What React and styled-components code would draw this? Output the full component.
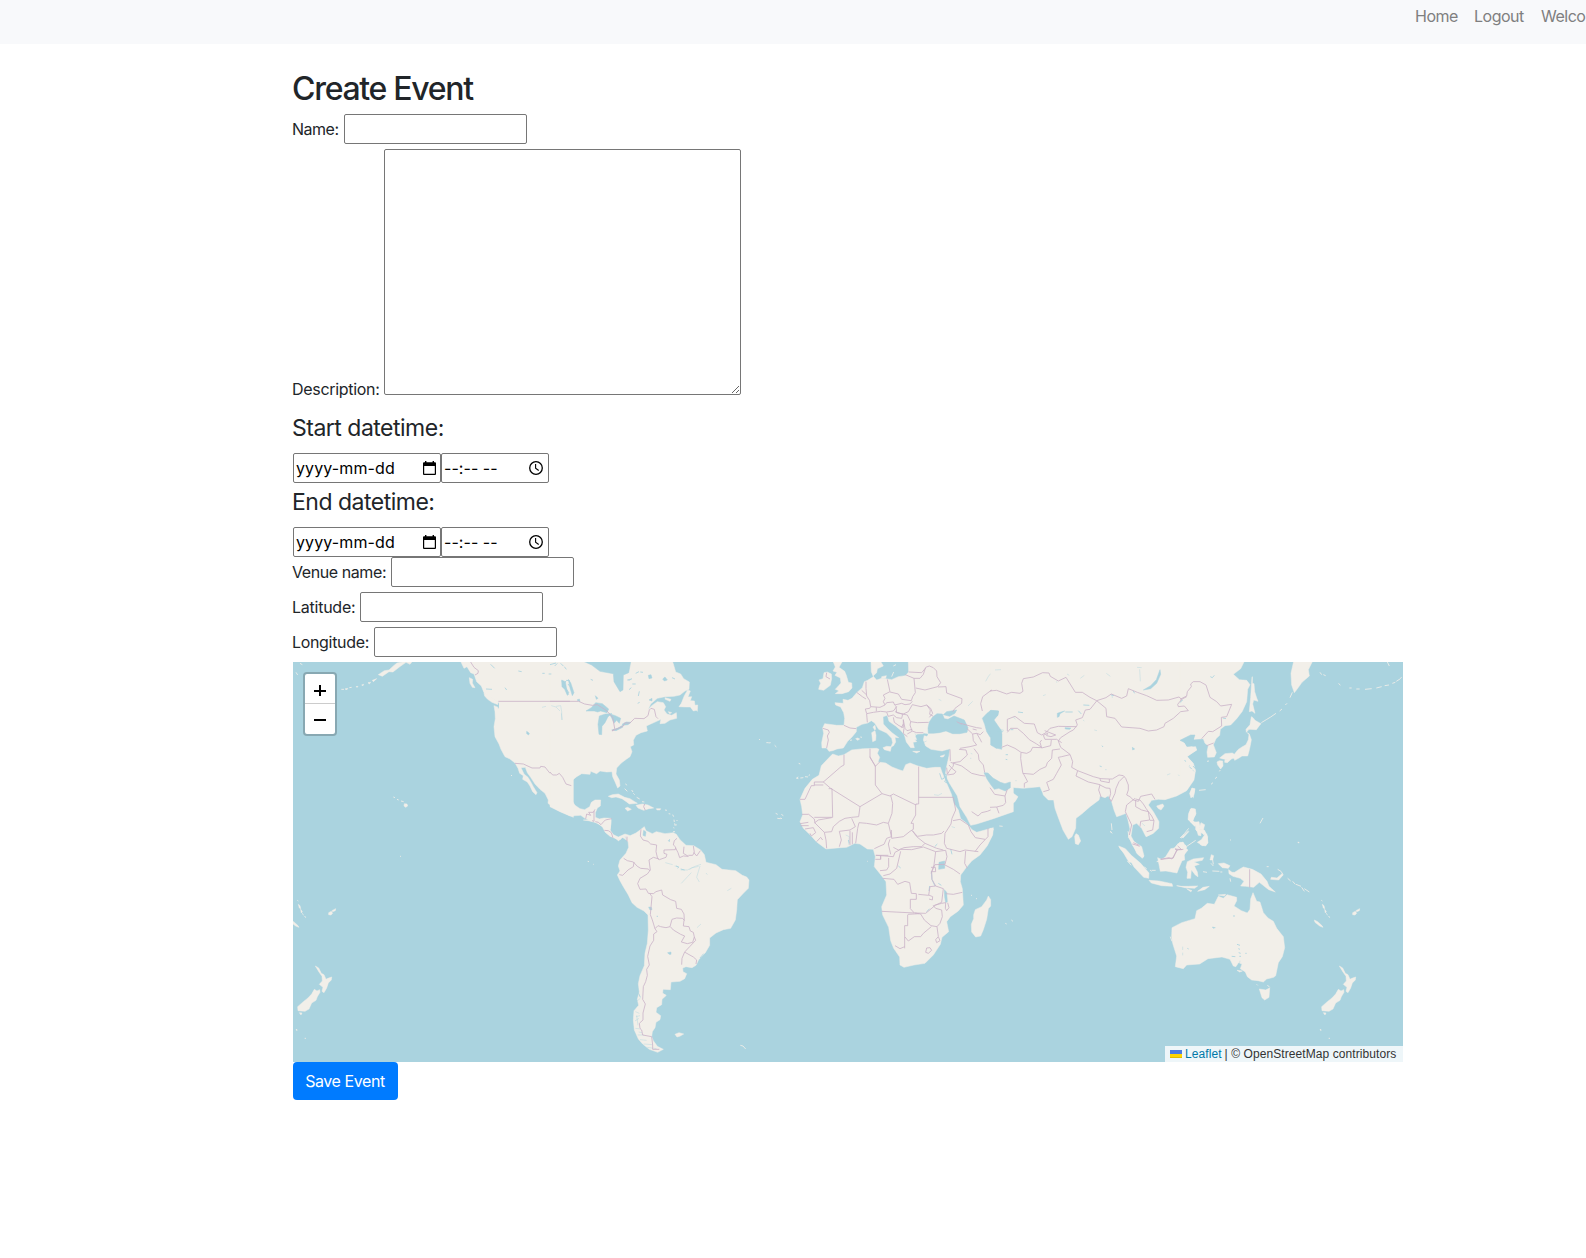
import React from "react";
import styled, { createGlobalStyle } from "styled-components";

const GlobalStyle = createGlobalStyle`
  *, *::before, *::after { box-sizing: border-box; }
  body {
    margin: 0;
    background: #fff;
    color: #212529;
    font-family: Inter, Roboto, sans-serif;
    font-size: 16px;
    line-height: 24px;
    overflow: hidden;
  }
`;

const Navbar = styled.nav`
  display: flex;
  height: 44px;
  padding-left: 1407px;
  overflow: hidden;
  background: #f8f9fb;
`;

const NavLink = styled.a`
  flex: none;
  padding: 4px 8px 0;
  width: ${(p) => p.$width}px;
  white-space: nowrap;
  color: #7f7f80;
  letter-spacing: -0.5px;
`;

const Container = styled.main`
  width: 1110px;
  margin: 26px 0 0 293px;
`;

const Title = styled.h2`
  margin: 0 0 6px -1px;
  font-size: 32px;
  line-height: 38px;
  font-weight: 500;
  letter-spacing: -1.3px;
`;

const Subtitle = styled.h4`
  margin: 0 0 10px -1px;
  padding-top: ${(p) => p.$top}px;
  font-size: 23px;
  line-height: 29px;
  font-weight: 400;
  letter-spacing: -0.5px;
`;

const Field = styled.div`
  display: flex;
  align-items: ${(p) => (p.$bottom ? "flex-end" : "center")};
  margin-bottom: ${(p) => p.$gap ?? 5}px;
`;

const Label = styled.label`
  flex: none;
  width: ${(p) => p.$width + 1}px;
  margin-left: -1px;
  white-space: nowrap;
  letter-spacing: ${(p) => p.$spacing}px;
  margin-bottom: ${(p) => (p.$low ? -6 : 0)}px;
`;

const TextInput = styled.input`
  width: 183px;
  height: 30px;
  margin: 0;
  padding: 1px 2px;
  border: 1px solid #767676;
  border-radius: 2px;
  outline: none;
`;

const TextArea = styled.textarea`
  display: block;
  width: 357px;
  height: 246px;
  margin: 0;
  padding: 2px;
  border: 1px solid #767676;
  border-radius: 2px;
  resize: both;
  outline: none;
`;

const Picker = styled.div`
  display: flex;
  align-items: center;
  justify-content: space-between;
  width: ${(p) => p.$width}px;
  height: 30px;
  padding: 0 ${(p) => p.$end}px 0 2px;
  border: 1px solid #767676;
  border-radius: 2px;
  color: #000;
  white-space: nowrap;
  letter-spacing: ${(p) => p.$spacing}px;
`;

const MapFrame = styled.div`
  position: relative;
  width: 1110px;
  height: 400px;
  overflow: hidden;
  background: #aad3df;
`;

const MapSvg = styled.svg`
  display: block;
`;

const ZoomControl = styled.div`
  position: absolute;
  top: 10px;
  left: 10px;
  width: 34px;
  height: 64px;
  border: 2px solid rgba(0, 0, 0, 0.2);
  border-radius: 4px;
  background: #fff;
  background-clip: padding-box;
`;

const ZoomButton = styled.div`
  display: flex;
  align-items: center;
  justify-content: center;
  height: 30px;
  border-bottom: ${(p) => (p.$divided ? "1px solid #ccc" : "0")};
`;

const Attribution = styled.div`
  position: absolute;
  right: 0;
  bottom: 0;
  display: flex;
  align-items: center;
  width: 238px;
  height: 16px;
  padding-left: 5px;
  background: rgba(255, 255, 255, 0.8);
  color: #333;
  font: 12px/16px "Liberation Sans", Arial, sans-serif;
  letter-spacing: 0.08px;
  white-space: nowrap;
`;

const LeafletLink = styled.a`
  margin: 0 3px;
  color: #0078a8;
`;

const SaveButton = styled.button`
  display: block;
  width: 105px;
  height: 38px;
  padding: 0 1px 0 0;
  border: 0;
  border-radius: 4px;
  background: #007bff;
  color: #fff;
  font: 400 16px/24px Inter, Roboto, sans-serif;
  letter-spacing: -0.43px;
`;

const CalendarIcon = () => (
  <svg width="15" height="16" viewBox="0 0 15 16">
    <path fill="#000" fillRule="evenodd" d="M3 1h1.400v1.300h6.200V1H12v1.300h1a1 1 0 0 1 1 1V14a1 1 0 0 1-1 1H2a1 1 0 0 1-1-1V3.300a1 1 0 0 1 1-1h1zM2.200 6v7.800h10.600V6z" />
  </svg>
);

const ClockIcon = () => (
  <svg width="16" height="16" viewBox="0 0 16 16" fill="none" stroke="#000">
    <circle cx="8" cy="8" r="6.300" strokeWidth="1.300" />
    <path d="M7.600 4v4.300l3.100 2.200" strokeWidth="1.100" />
  </svg>
);

/* Map sections: each has its own origin and a grid of a third of a pixel. */
const SECTIONS = {
  pacific: [-3, -2],
  america: [257, -2],
  south: [267, 158],
  europe: [487, -2],
  asia: [697, -2],
  fareast: [887, -2],
  africa: [487, 178],
  oceania: [807, 168],
  west: [-13, 198],
};

const NEW_ZEALAND =
  "M718 408l10 6 8 16 8 4 6 14 6-3 11-4-1 9-9 9-5 15-8 14-6-4 3-12-11-9 9-10-1-14-9-13zM715 478l8 5 8-4 1 8-8 13-4 11-13 8-8 18-12 7-21-2-1-12 17-15 14-11 11-12zM670 548l8 1-3 6zM660 599l3-1 0 4zM686 625h4";
const MELANESIA =
  "M758 248l8-4 4 6-5 5-7-1zM768 242l11-6-1 6-8 3zM643 270l10 5 12 11 4 6-10-4-14-11zM667 223l5 4 2 9-4-2zM674 238l5 7-3 4zM678 250l5 5M686 258l3 5M664 211l3 2";

const LAND = [
  ["pacific", "M513 6L522 25 531 20 542 38 552 42 560 65 574 78 582 98 600 110 615 120 627 128 627 142 620 140 612 137 615 155 616 176 612 200 615 230 627 252 633 268 645 290 660 297 675 309 684 325 689 340 700 347 698 358 712 366 720 378 728 395 738 404 741 398 730 380 722 365 714 352 702 342 693 323 706 322 712 338 722 352 735 372 750 388 765 400 775 420 774 430 800 448 850 472 850 0 513 0z"],
  ["pacific", "M538 53l10 5-1 11 8 14-8-1-7-12zM582 99l12 4 15 12 15 11 0 8-18-7-13-9-9-10zM370 0l-10 13-12-6-21 15-18 14-12-1-20 14-12-5 18-12 14-2 14-13 10-8z"],
  ["pacific", "M247 61l13-5-10 9zM234 68l8-1-4 5zM215 75l6-2-2 4zM198 80l6-1-2 3zM178 83l7-1M165 87l8-2-2 4zM154 88l8 0M18 37l5 8M30 10l7 4M343 431l8 1 2 6-6 4-5-4zM333 423l8 2M310 411l5 2M321 418l5 2M330 588l3 2M663 346l3 1"],
  ["america", "M0 0L0 440 30 455 60 468 92 466 105 475 122 484 144 489 158 502 166 517 180 529 195 534 206 543 210 535 225 529 234 544 244 528 225 522 205 531 190 524 180 510 183 490 183 475 162 474 148 477 136 472 136 458 142 444 151 438 152 420 135 420 124 427 119 440 104 449 90 446 75 436 65 420 60 400 62 380 68 360 80 350 95 341 120 343 122 334 140 341 150 333 170 336 186 335 188 350 195 365 203 384 210 378 208 360 198 342 200 324 214 309 230 297 240 290 246 275 241 260 251 255 250 241 258 226 273 218 292 213 289 198 302 192 320 184 333 178 330 191 345 190 360 180 380 175 379 158 365 166 351 162 342 150 347 140 340 128 322 125 305 137 294 149 302 132 322 115 345 110 372 109 390 105 405 93 417 88 418 66 401 56 392 42 377 36 370 12 366 0z"],
  ["america", "M413 90l-10 17-9 23-7 10 20 1 14 0 9 12 9-2 3 3 1-19-8 1-2-13-12-1 4-12-11 1 7-18zM345 113l18 5-3 6-14-6zM355 155l10 3-6 3zM175 409l12-5 18-2 19 10 16 4 14 9 8 5-24 2-9-7-13-9-18-5-13 2zM225 445l8-3 11 6-11 5zM258 436l19-4 17 3 17 9-14 2-16 5-17-7zM319 446l13 0-2 4h-9z"],
  ["america", "M227 371l3 5M224 386l8 8M245 390l4 6M250 400l4 4M260 412l9 5M276 425l7 1M345 450l6 1M356 461l5 1M368 464l3 6M372 479l1 7M374 490l1 7M369 515l6 0M370 503l3 1M627 237l3 3M649 248l7 0M656 249l6-1M674 256l5 5M738 354l7 2M677 460l6 3M682 475l9 1M694 463l6 4"],
  ["south", "M70 0L100 4 130 20 136 36 158 52 180 60 187 52 204 63 206 82 198 100 180 120 175 138 180 153 172 165 180 182 190 200 205 225 216 248 231 262 252 273 264 285 265 330 262 370 255 400 253 437 240 467 235 491 238 516 232 538 236 556 222 572 220 600 223 630 235 657 248 672 268 688 293 697 310 688 292 679 280 662 275 650 277 635 285 623 288 607 300 599 302 587 288 577 290 563 305 554 306 538 318 527 308 519 309 508 331 509 333 486 360 484 374 476 380 461 369 455 368 444 378 440 396 443 408 436 416 419 436 398 449 376 449 354 468 339 490 329 512 325 526 300 530 270 532 239 550 220 565 205 567 180 560 171 547 166 527 152 486 148 468 134 438 127 433 104 422 90 401 77 378 76 360 59 349 43 340 38 315 41 289 35 277 41 258 32 253 20 239 31 228 39 213 46 200 60 191 46 175 55 157 43 150 35 153 0z"],
  ["south", "M345 643l12-5 14 4-12 7-8 2zM541 676l8 2 8 9M83 124l4 1M99 133h2M348 12v5M351 0v3M311 523l8 3"],
  ["europe", "M385 6L386 36 376 47 355 50 335 59 322 57 305 55 290 60 279 48 290 38 292 26 310 18 303 6 273 6 274 35 280 50 263 61 253 65 247 83 230 98 216 115 204 121 189 118 190 130 165 128 167 135 182 141 191 158 194 175 192 196 170 196 134 191 128 204 131 220 125 248 126 264 140 264 147 274 158 272 171 267 190 264 203 244 216 231 229 215 229 202 246 193 263 189 274 182 284 189 296 208 320 219 335 235 338 248 333 260 340 258 347 246 345 232 356 233 337 219 324 207 310 192 309 170 322 166 327 184 347 198 362 211 373 224 379 246 392 263 403 263 399 247 410 245 399 231 413 222 434 221 430 240 437 258 453 268 486 273 510 266 507 288 499 323 496 344 508 369 532 408 540 440 560 472 572 496 590 492 640 476 700 455 700 0 385 0z"],
  ["europe", "M160 6l6 15-7 12 12 4-6 9 16 8 2 15-6 7-11 12 11 4-11 9 20 0 20-6 10-11-1-15-10-2-6-21-5-12-17-12 9-16-3-6zM132 38l10-2 12 6 1 14-4 20-20 15-15-3 2-9 4-9-5-10 12-4zM275 218l10-6 3 14-1 15-9 4zM285 196l-6 5 5 9 3-2zM309 263l11-4 14 1-3 14-18-5zM379 222l9-6 16 8 6 15-17-3zM398 274l22 0-10 5zM480 289l14-5-4 7-6 0zM227 236l6-2 6 3-6 4zM210 241l6-1M241 231l5 1M305 50l14-3-2 8-12 0zM335 50l6-14M340 18l8-4"],
  ["europe", "M158 282L175 288 192 284 215 270 250 266 290 265 297 268 292 280 299 292 294 306 317 309 336 321 357 329 369 333 377 314 390 309 414 318 440 325 465 322 481 322 486 337 500 370 514 402 521 430 535 450 542 476 560 490 576 509 590 517 640 503 638 525 622 557 600 585 575 603 557 625 542 645 541 665 547 686 550 735 535 753 511 770 500 785 506 815 486 832 481 853 460 885 435 910 402 915 372 922 360 915 359 891 341 865 332 842 326 802 308 765 305 740 320 705 318 665 303 645 283 620 286 590 280 568 262 567 240 552 224 550 200 562 180 563 138 567 109 545 91 525 70 505 60 485 68 465 65 440 60 418 75 385 97 358 117 346 124 317 151 289z"],
  ["europe", "M51 353l4-2M61 354l9-1M75 350l9 1M86 347l4-3M56 310l5 2M0 474l6 2M485 269l3 3"],
  ["africa", "M625 168l-5 12-15 20-19 9-5 15 0 12-7 17 1 23 12 15 15-3 8-19 10-31 5-32 7-8 0-19zM573 165l3 2M588 175l3 2M676 250l4 2M694 240l5 4M262 64h2"],
  ["asia", "M0 0L0 335 15 355 28 369 54 377 75 383 100 385 150 380 158 398 160 405 175 420 191 420 195 445 204 470 219 510 235 538 246 530 257 505 258 475 275 462 300 440 327 420 330 408 345 413 355 407 365 425 372 450 380 470 395 465 408 460 414 480 420 507 415 532 428 550 440 580 457 595 462 588 455 560 432 545 423 528 428 495 440 490 455 505 468 530 490 520 506 505 507 485 490 455 475 435 485 421 505 418 525 419 560 408 590 392 612 360 616 330 610 310 591 290 620 270 606 260 590 262 580 245 607 229 640 225 640 0z"],
  ["asia", "M0 475L40 458 60 435 75 425 84 410 70 400 55 393 54 373 43 395 22 402 0 378zM258 521l7 4 7 18-7 11-9-3-2-22zM0 505l10 2-5 20-5 10zM500 438l18-6 4 6-9 12-9-5zM606 384l8 4-4 25-10-10zM601 447l13 1 2 17-10 17 9 5 1 12-16-14-3-17zM388 561l14 6 20 20 15 20-20 0-15-26zM500 605l26-13 16-26 13-2 14-17 12 1 3 14 10 8-28 35zM575 532l22-18-17 19zM617 486l10 8 3 26-13-11zM364 490l2 20M362 514l2 4M28 498l10 1"],
  ["fareast", "M0 0L0 395 20 380 40 358 46 333 34 305 20 288 50 270 47 260 20 262 10 246 32 226 44 226 42 238 70 236 75 250 85 257 81 276 83 292 103 291 109 278 100 254 108 236 119 226 121 208 135 197 152 195 170 176 187 154 200 125 203 88 210 74 200 61 178 59 160 43 182 26 192 6 192 0z"],
  ["fareast", "M342 0l-9 40 2 35 8 23 8-10 15-21 22-19-3-19 12-24-4-5zM216 52l-4 60-4 43 8-2 9 7-7-28 3-12 13 4-4-10-6-19-2-24-5-1 0-20zM214 170l-4 24-12 14 1 9 8-9 22 1 9-12 5-6-18-10-6-8zM202 218l6 4 6 17-3 17-4 18-4 14-17 0-9 6-13 7-2-6-16 3-17-1-10-3 16-13 22-2 6 4 11-14 12-8 12-7 7-15 2-15zM118 302l10 1 1 15-7 9-9-12-2-9zM135 297l11-4 9 3-13 12-8-1zM36 385l9 1-3 17-9 11-4-14zM34 445l12 2 2 14-6 12-3 10 10 8-5 8-14-16-6-4 2-19zM80 521l4 27-7 10-15-3 0-13 10-2zM0 550l8-4 10 14-6 14 2 26-14 3zM94 584l7 3-3 13h-8z"],
  ["fareast", "M42 487l15-2 3 16-11-3zM63 488l11 6-4 16-14-1zM50 510l12 2 1 15-8-1zM67 512l9 7-7 5M0 534l14-14 12-15M19 560l28-19M240 490l9-16M244 188l15-9 13-8 16-11M299 153l7-6M316 135l5-5M330 113l7-16M420 37l5 7M430 44l7 3M476 70l5 6M508 84h7M529 87h10M555 88l20-2M589 84l16-4M614 77l13-2M637 70l9-3M649 64l11-7M660 56l5-4M93 373l6-5M105 356l6-5M118 334l3-4M57 391l20-2M622 6l6 12M354 548h4M150 540h3M81 304l6-1"],
  ["oceania", "M216 293L245 278 285 266 290 242 304 235 322 220 343 223 355 199 370 205 381 194 410 202 410 212 402 228 424 242 442 249 450 238 452 207 459 188 470 214 480 216 490 248 504 264 520 274 530 295 550 320 554 353 547 380 535 398 527 437 521 442 500 447 490 456 474 452 455 450 442 440 436 426 421 416 426 402 415 398 408 410 400 408 390 388 366 381 324 386 299 402 260 405 250 416 226 410 230 378 218 340 215 320z"],
  ["oceania", "M478 477l19 3 12-6-2 28-13 8-8-7zM502 465l7 7M470 463l3 3M355 195l22-2-4 5zM411 421l16 2-8 3zM211 320l5 14M56 48l20 8 18 20 28 24 25 29-1 16-15-3-29-31-17-30-24-24zM84 4l10 24 20 17 8 14 9 22-14-5-20-31-11-26zM173 83l15 7 23-21 24-29 5 11 17-6 3 9-9 7-4 29-10 23-6 16-33-6-17 1zM147 151l30 2 39 8 2 8-33-2-31-8zM230 167l15 2 20 0 28-1-9 7-29-2zM293 184l16-12 19-3-14 10zM260 176l16 6-4 3zM262 95l18-8 31-4-4 8-25 5 16 7-15 5 9 18 2 14-8-5-12-16-2 26-11 0 2-18-5-15zM386 119l10 8 8 0 12-8 14-8 27 7 26 14 18 22 6 15 19 17-20-7-28-22-17 15-24-3-15-1 10-14-11-9-22-6-12-8zM355 101l17-2 18 8-5 8-18-2zM514 142l17 2 15-13 4 3-14 16-24-2zM533 118l10 6 5 8M336 78l4 25M333 100l7 8M337 123l21 1M309 125l12 2M361 126h6M390 145l2 10M150 120l5 4M133 111l7 5M155 121h12M82 93l12 13M140 0l20 0-2 10-18 9-6-11zM288 0h25l10 20-2 22-13 5-16-10 12-8 10-15zM243 25l22-22M563 145l9 8M578 154l8 9M588 163l15 6M605 172l8 12M613 176l15 10M30 4l7 6M593 37h4M500 110h6"],
  ["oceania", MELANESIA],
  ["oceania", NEW_ZEALAND],
  ["west", MELANESIA, "translate(-612 -90)"],
  ["west", NEW_ZEALAND, "translate(-612 -90)"],
];

const WATER = [
  ["america", "M92 0L125 15 150 34 190 41 192 65 210 95 219 90 220 45 236 38 242 6 242 0zM108 153l16-10 13-15 20 3 19 16-5 11-19-5-9 3-10-3zM148 168l18-6 20-1-12 9-9 18-9 11-1 25-8-1-3-30zM178 161l18 6 16 8-4 15-8-9-8 9-6-14zM185 210l19-6 14-8 0 6-20 10zM217 192l12-6 14 1-9 7-16 2zM35 60l11 5 4 22 6 16-4 3-8-18-8-8zM55 58l7 10 10 30-5 9-7-23zM295 46l8-2 3 10-9 2zM338 57l7-6 7 9-9 3zM232 60l14-4-8 5zM237 89l7-6M297 120l9-5 0 8zM263 130l6-3M122 58l7 3M32 10l8 8M43 20l6 8M136 107l8 8-5 3zM257 40l10-5M271 36l8 1M247 72l10 0M366 53l9 4M265 108l3-14M0 14l18-5M81 120l7-3 2 8z"],
  ["america", "M4 137l14 4 12 12M34 160l3 20", "thin"],
  ["pacific", "M710 214l8 6-2 5-6-4zM685 33l10 2M757 40h7M776 42l8 0M645 83l5 7M802 10l-8 8M588 87l18 1M625 130l0 15M602 13l12 12M815 65l8 2 2 14 12 18M822 70l8-9 10 2M840 80l-6-8"],
  ["pacific", "M798 139l14-2 3 18 0 25M756 142l12-3", "thin"],
  ["south", "M251 31l7 5-2 13-7-3zM325 62l4-4-1 7zM266 261l8 1 2 7-6 1zM323 398l10-2 0 7h-6zM290 289h4M431 401l-11 13M236 520l5 12M348 138l8 3-3 4M362 147l12 3"],
  ["south", "M316 128l22 6M344 138l12 2M362 150l20 0 8-4 15-7 18-6M388 150l6-6 22-5M364 190l30-32M418 186l-8-14 10-34M438 159l4 5M502 212l12-7M411 323l12-11M229 545l12-10M226 575l12 5M225 603l12-8M226 625l16 2M233 645l18 0M240 659l20 2M251 672l26 2M262 682l28 4M230 586l4 30M228 590l12-3M236 636l10 2", "thin"],
  ["europe", "M445 220l-1-16 4-18 10-15 13-10 16 1 6 14 11 2 18-10 31 12 11 23-3 14-22 4-21 0-20-8-20 5-18 2zM490 164l10-9 30-5-5 10-16 9zM431 221l12 1-2 6-10-3zM607 175l14-15 12-9 22 2-1 13-14 10 0 15 16 17 9 15 0 34-16 8-17-10 0-21-12-19-6-22zM612 338l12 1 15 15 22 13 14 4 16-5 0 17-15 10-20-8-13 3-10-13-12-18zM479 340l6 18 7-3 3-12 4 0 0 12-5 10 10 5"],
  ["europe", "M462 404l13 2 11-6M572 280l5 2M515 500l10 3M570 295h4M617 64l10-18 5-4M564 138l14-14M476 118l8 4M648 207l22 3-2 6M197 525l11 5-2 24M405 220l10 15M410 238l22-14M412 255l28-12M408 270l24-14", "thin"],
  ["asia", "M0 152l26 1-3 13-11 14 13 19 10 14 0 55-17-4-10-10-2-20-6-20zM510 29l2 14-12 27-18 16-22 4 22-13 17-18zM202 172l0-12 14-5 8-2-14 8-3 9zM226 156l22 0M265 152l9 10M280 135l18 1M225 203l18 1-4 4-13-1zM84 156l15 2M62 209h8M427 262l7 5-6 3zM336 257l3 4M329 318l6 2M362 104l10 3M429 92l5 8M47 284l7 0M47 298l5 1"],
  ["asia", "M70 170l6 8M345 329l5 0M279 180l4 3M313 210l8 2M159 107l8-3M366 102l1 12M455 489l10 9M441 22l14 1M449 28l2 36M349 40l12 9M271 55l12-9M231 42l7 4M15 30l18-1M565 344l3 4M531 345l10-4M20 212l18 3-10 6M570 130l8-10M198 66h4M76 362h4M597 316l3 2M607 330l6 4", "thin"],
  ["africa", "M477 67l17-4 0 22-18 3zM464 20l8-8M512 27l4 16M493 149l7 8 2 28-5 3-3-18zM454 93l2 26 9 19M440 215l9-9M449 138l-2 15M475 130l9 6M355 78l7 6M205 0l3 10"],
  ["oceania", "M399 258h6M337 291l9 2-6 2zM411 343l9 3M415 356l5 2M395 379l11 1M416 368l6 2M418 379h5M436 370h4M262 355l4 2"],
  ["oceania", "M248 350v10M248 368v8M408 410l10-6 2-12", "thin"],
  ["fareast", "M91 50l6 3 6-7M0 125l8-5M14 300l3 5M28 320l7 7M0 241l32-16 13 0-10 25-14 1zM39 318l7 8M128 174l10 2"],
];

const BORDERS = [
  ["pacific", "M542 6L552 22 565 32 564 40 555 45M625 124H840M675 310L700 312 726 324H750L752 319 765 321 780 340"],
  ["america", "M0 124H86L104 132 127 136 142 134 170 152 188 172 194 205 186 213 220 198 224 189 240 189 254 175 282 176 294 167 298 150 303 145 313 148 318 170 324 176M0 336L8 345 20 345 28 340 38 352 48 372 64 377M107 477L110 462 122 466 116 457H130L135 448M132 453V484L126 482M136 485L145 487 153 494 160 486 166 480 185 476M163 511L175 512 184 518 189 534M231 530V544M284 432L281 440 286 451"],
  ["south", "M243 28L241 48 249 60 264 64 272 72 290 75 288 95 293 116 298 119 318 112 321 103 312 100 312 90 346 89 347 81 340 75 343 62 351 55M347 84L354 98 359 113 370 108 385 109 370 100 372 80M385 106H398L403 97 400 78M401 97L410 108 421 92M297 117L280 112 267 120 271 150 262 162 240 175 233 191 240 208 258 207 265 220 280 221 288 215 305 210 308 225 332 239 347 244 350 265 364 268 372 282 373 302 368 295 350 294 336 298 330 320 318 323 302 320 294 317 285 326 277 300 271 284 276 230 269 220M191 115L202 122 220 126 232 139 242 145 265 147 270 153M222 126L220 140 204 150 188 166 178 164M285 326L291 335 281 342 281 361 270 378 263 409 268 435 260 448 262 466 257 485 250 500 248 538 256 552 249 579 249 600 238 610 240 625 245 630 248 645 275 650 278 675 278 688H298M331 320L340 330 362 343 374 348 364 366 382 371 398 367 403 351 400 337 391 333 387 320 370 318 372 302M403 351L407 361 390 379 374 396 366 415 365 434M375 397L400 411 410 420 408 432"],
  ["europe", "M258 65V85L260 108 269 122 272 140 300 142 315 135 310 125 315 115 310 105 330 95 322 58M330 96L355 102 365 118 394 122 398 110 406 98 402 55 376 44M402 55L420 55 430 43 437 22 448 18 460 23 470 33 471 50 482 68 473 80 435 90 407 84M386 36L425 38 437 24M397 124L390 132 375 134 365 130 344 135 340 126 320 128 316 134M474 81L498 80 500 99 546 116 545 130 525 145 518 155M230 97L247 110 258 117M245 91L260 105M256 147L269 145 272 140M256 147L260 161 280 157 302 154 320 156 340 153 350 140 345 137M260 162L262 187M289 142V154M348 141L350 158 370 162 385 155 397 134 423 140 440 135 452 145 458 160 448 172M440 135L451 150 449 163 460 169M320 157L325 169 340 165 350 173 365 175 368 163 345 155M340 172L343 187 357 197 370 203 370 178M367 162L382 165 392 185 412 188 446 187M392 185L390 195 396 213 410 218 430 218M370 180L375 205 381 212 397 208M372 205L370 220 382 230M364 203L370 192M396 214L382 222M192 196L210 204 229 206M128 205L145 210 148 217 142 228 145 240 140 264M140 38L138 50 150 57M270 266L270 293 286 318 286 375 306 401 240 440 152 385 130 366 183 320 192 315V284M270 290L286 319 300 305M416 320V432H408V435L340 402 330 408 306 401M416 412H520M240 440L236 470 215 472 195 475 178 484 160 500 155 515 133 517M332 406L338 430 336 460 325 490 310 487 290 495 260 490 237 488 233 505 227 550M66 463L86 463 103 477 105 489 133 517 138 540 140 565M103 472H158L156 386H146M131 366H103V377H94L75 418H60M103 375H130M60 491L85 487M62 497H86M75 507L100 503 107 518 94 528 90 520M110 545L122 532 128 540M178 560L184 540 178 514 210 510 226 500 215 475M210 512V555M217 517V553M103 489L115 480 155 473M325 490L330 510 334 530 320 535 312 553 300 558 283 566M334 510L335 535 370 530 390 514 400 508 400 490 393 490 407 465V433M397 512L410 530 435 550 470 565 490 570M397 512L412 529 440 525 460 525 485 520 492 513M520 412L527 450 516 475 513 492 495 520 493 550 500 565 540 575 555 570 595 575M519 482L540 478 565 495 573 515 586 533 615 538M624 505L624 530 600 555 585 575M435 550L425 560 400 560 372 563 355 570 340 562M330 538L325 552 332 583M287 586H325M302 586V598M537 268L558 270 562 285 540 305 520 308 520 318 510 330 502 343 500 323M510 268L511 303M512 307L545 318 575 340 600 346 615 348M582 266L595 283 597 300 610 315 614 337M542 190L570 198 590 203 605 205M560 205L578 222 590 220 600 237 605 247M578 222L580 242 590 255 570 260 540 265M590 220L601 224 610 215M607 153L602 131 608 110 635 90 632 93M507 315L516 325 528 335 522 342 502 345M575 455L594 468 605 458 622 454 632 450M530 185L545 193M578 207L590 210"],
  ["asia", "M0 93L20 91 50 102 65 97 90 100 99 94 95 70 100 56 130 51 158 38 177 39 181 49 205 63 228 52 256 97 277 97 300 112 320 122 348 113 364 102 395 115 410 108 415 86 442 97 470 107 500 121 535 120 567 111 575 118 590 110M575 118L563 133 565 140 583 138 595 152 572 155 550 175 525 190 522 200 500 210 475 213 450 205 395 201 375 175 350 170 348 145 320 122M320 123L300 148 286 150 277 173 257 180 262 195 250 210 240 215 212 233 205 243 212 262 240 283 248 305 245 322 263 332 310 350 333 356 358 357 367 357 387 345 400 347 407 355 415 375 415 390 410 405 420 410 430 420 445 424 452 409 485 402 495 418M263 332L258 348 295 366 330 374M330 356L332 363 358 368 358 357M330 375L348 384 360 385 362 400 358 415 364 424 375 400 378 385 387 365 402 350M330 374L326 390 334 413M52 213V178L75 169 103 190 133 192 142 218 155 225 168 218 180 205 205 199 260 200M164 212L197 225 183 230 170 227 173 220 160 226M160 226L165 238 200 238 215 248M155 240L150 247 155 264 182 257 184 240M52 217L62 205 82 205 100 220 118 239 140 252 155 262M35 262L52 255 75 265 93 277 110 280 122 274 128 262 155 263M93 278L92 295 98 337 113 365 103 370V383M98 340L130 343 150 328 168 320 172 308 185 295 187 270 210 267M240 284L215 290 205 292 214 315 200 340 190 358 170 367 178 390 160 395M435 415L410 435 406 455 418 480 425 495 418 525M437 420L437 440 455 450 475 455 479 480 452 484 450 500M436 417L450 420 460 432 468 445 485 468 492 482 488 510 470 515M480 481H492M0 383L14 403 45 408 52 388M45 408L47 428 40 436 20 441 0 442M20 441L27 460M430 548L448 556M512 598L550 594 560 570 580 568"],
  ["fareast", "M0 118L20 108 22 95 34 80 32 72 40 65H60L78 75 90 112 110 125 122 138 155 133 140 170 124 172 125 198 98 215 85 214 65 236M80 257L101 249"],
  ["africa", "M288 46L315 48 340 50 345 37 362 28 395 29 430 21 467 35 462 75 455 95 456 118 467 138 490 146 485 187 467 195 437 220 403 219 305 214M302 46V58H286M326 54V80L320 90 300 92M308 115L342 118 353 133 375 124 389 128 394 160 409 161V178H391V206L403 219M310 107L330 102 350 85 362 34M467 138L450 140 446 166 415 163M446 165L458 170 457 180 447 177M467 35L497 31 501 50 495 73 465 74 453 100M453 82L466 82 467 95 455 95M495 75L520 88 540 102M557 33L554 70 562 85M497 161L520 163 547 157M503 188L507 203 500 212 496 205 497 188 485 190M485 190L460 197 467 205 485 210 487 230 480 250 471 260 453 257 433 240 422 222 405 219M384 223L418 221M383 224V257H374V325M454 260L430 280 422 290 403 290 385 303 375 291M374 320L360 326 345 317M471 260L475 290 480 302 470 308 467 299 474 291M440 324L450 323 455 331 445 340 437 337Z"],
  ["oceania", "M449 118V173M182 88L207 83 216 87 232 60 225 57 245 59 233 48M97 42L108 45 119 49"],
];

const Section = ({ name, children, shift }) => (
  <g transform={`translate(${SECTIONS[name].join(" ")}) scale(.333333)`}>
    <g transform={shift}>{children}</g>
  </g>
);

/* Closed outlines are filled; open ones are streams and island chains. */
const Shape = ({ d, color, thin }) => {
  const parts = d.match(/M[^M]+/g);
  const closed = parts.filter((part) => part.includes("z")).join("");
  const open = parts.filter((part) => !part.includes("z")).join("");
  return (
    <>
      {closed && <path d={closed} fill={color} stroke={color} strokeWidth="1.500" />}
      {open && (
        <path d={open} fill="none" stroke={color} strokeWidth={thin ? 2 : 3} opacity={thin ? 0.6 : 0.85} />
      )}
    </>
  );
};

const WorldMap = () => (
  <MapSvg width="1110" height="400" viewBox="0 0 1110 400">
    {LAND.map(([name, d, shift], i) => (
      <Section key={i} name={name} shift={shift}>
        <Shape d={d} color="#f2efe9" />
      </Section>
    ))}
    {WATER.map(([name, d, thin], i) => (
      <Section key={i} name={name}>
        <Shape d={d} color="#aad3df" thin={thin} />
      </Section>
    ))}
    {BORDERS.map(([name, d]) => (
      <Section key={name} name={name}>
        <path d={d} fill="none" stroke="#cbb4c9" strokeWidth="2.500" />
      </Section>
    ))}
  </MapSvg>
);

const DateTimeRow = () => (
  <Field $gap={0}>
    <Picker $width={148} $spacing={0.12} $end={3}>
      yyyy-mm-dd
      <CalendarIcon />
    </Picker>
    <Picker $width={108} $spacing={0.05} $end={4}>
      --:-- --
      <ClockIcon />
    </Picker>
  </Field>
);

export default function App() {
  return (
    <>
      <GlobalStyle />
      <Navbar>
        <NavLink $width={59}>Home</NavLink>
        <NavLink $width={67}>Logout</NavLink>
        <NavLink $width={70}>Welco</NavLink>
      </Navbar>
      <Container>
        <Title>Create Event</Title>
        <Field>
          <Label $width={51} $spacing={-0.5}>Name:</Label>
          <TextInput />
        </Field>
        <Field $bottom $gap={0}>
          <Label $width={91} $spacing={-0.3} $low>Description:</Label>
          <TextArea />
        </Field>
        <Subtitle $top={19}>Start datetime:</Subtitle>
        <DateTimeRow />
        <Subtitle $top={5}>End datetime:</Subtitle>
        <DateTimeRow />
        <Field>
          <Label $width={98} $spacing={-0.42}>Venue name:</Label>
          <TextInput />
        </Field>
        <Field>
          <Label $width={67} $spacing={-0.25}>Latitude:</Label>
          <TextInput />
        </Field>
        <Field>
          <Label $width={81} $spacing={-0.33}>Longitude:</Label>
          <TextInput />
        </Field>
        <MapFrame>
          <WorldMap />
          <ZoomControl>
            <ZoomButton $divided>
              <svg width="14" height="14" viewBox="0 0 14 14" stroke="#000" strokeWidth="2">
                <path d="M1 9H13M7 3V15" />
              </svg>
            </ZoomButton>
            <ZoomButton>
              <svg width="14" height="14" viewBox="0 0 14 14" stroke="#000" strokeWidth="2">
                <path d="M1 8H13" />
              </svg>
            </ZoomButton>
          </ZoomControl>
          <Attribution>
            <svg width="12" height="8" viewBox="0 0 12 8">
              <path fill="#4C7BE1" d="M0 0h12v4H0z" />
              <path fill="#FFD500" d="M0 4h12v3H0z" />
              <path fill="#E0BC00" d="M0 7h12v1H0z" />
            </svg>
            <LeafletLink>Leaflet</LeafletLink>
            <span>| © OpenStreetMap contributors</span>
          </Attribution>
        </MapFrame>
        <SaveButton>Save Event</SaveButton>
      </Container>
    </>
  );
}
